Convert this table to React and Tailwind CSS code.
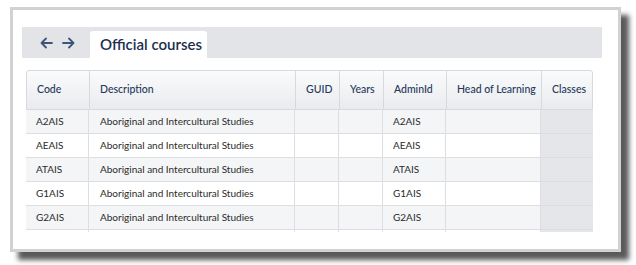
import React from 'react';

const columns = [
  { key: 'code', label: 'Code', width: 'w-[63px]' },
  { key: 'description', label: 'Description', width: 'w-[206px]' },
  { key: 'guid', label: 'GUID', width: 'w-[44px]' },
  { key: 'years', label: 'Years', width: 'w-[44px]' },
  { key: 'adminId', label: 'AdminId', width: 'w-[63px]' },
  { key: 'head', label: 'Head of Learning', width: 'w-[95px]' },
  { key: 'classes', label: 'Classes', width: 'w-[52px]' },
];

const rows = ['A2AIS', 'AEAIS', 'ATAIS', 'G1AIS', 'G2AIS'].map((code) => ({
  code,
  description: 'Aboriginal and Intercultural Studies',
  guid: '',
  years: '',
  adminId: code,
  head: '',
  classes: '',
}));

const App = () => {
  return (
    <div className="w-[636px] h-[265px] bg-white pt-[7px] pl-[10px] font-['Lato',sans-serif]">
      {/* Framed screenshot with heavy shadow */}
      <div className="w-[611px] h-[245px] border-[3px] border-[#d2d2d2] bg-white shadow-[8px_8px_5px_#5a5a5a] pt-[17px] pl-[9px] pr-[16px] overflow-hidden">
        {/* Tab bar */}
        <div className="h-[31px] bg-[#e2e4e8] flex items-end">
          <div className="flex items-center gap-[9px] h-full pl-[18px] pr-[15px] text-[#3d5577]">
            <svg width="13" height="12" viewBox="0 0 13 12" fill="none" stroke="currentColor" strokeWidth="1.8" strokeLinecap="round" strokeLinejoin="round">
              <path d="M12 6H1.5M6 1.5L1.5 6L6 10.5" />
            </svg>
            <svg width="13" height="12" viewBox="0 0 13 12" fill="none" stroke="currentColor" strokeWidth="1.8" strokeLinecap="round" strokeLinejoin="round">
              <path d="M1 6h10.5M7 1.5L11.5 6L7 10.5" />
            </svg>
          </div>
          <div className="h-[27px] w-[117px] bg-white rounded-t-[3px] pl-[10px] flex items-center whitespace-nowrap text-[15px] font-semibold text-[#1c2f4f]">
            Official courses
          </div>
        </div>

        {/* Table */}
        <div className="mt-[12px] ml-[4px] w-[567px] h-[162px] overflow-hidden">
          <div className="flex h-[40px] bg-gradient-to-b from-[#fafbfc] to-[#e9ebee] border border-[#d6d9dd] rounded-t-[3px] text-[10.5px] font-medium text-[#27385a] whitespace-nowrap">
            {columns.map((col, i) => (
              <div
                key={col.key}
                className={`${col.width} shrink-0 flex items-center ${
                  i === 1 ? 'pl-[10px]' : 'pl-[10px]'
                } ${i < columns.length - 1 ? 'border-r border-[#d6d9dd]' : ''}`}
              >
                {col.label}
              </div>
            ))}
          </div>
          {rows.map((row, r) => (
            <div
              key={row.code}
              className={`flex h-[24px] border-b border-[#dcdee2] text-[10px] text-[#2b2b2b] ${
                r % 2 === 0 ? 'bg-[#f4f5f7]' : 'bg-white'
              }`}
            >
              {columns.map((col, i) => (
                <div
                  key={col.key}
                  className={`${col.width} shrink-0 flex items-center ${
                    i === 1 ? 'pl-[11px]' : 'pl-[10px]'
                  } ${i < columns.length - 1 ? 'border-r border-[#dcdee2]' : ''} ${
                    col.key === 'classes' ? 'bg-[#e4e6ea]' : ''
                  }`}
                >
                  {row[col.key]}
                </div>
              ))}
            </div>
          ))}
          {/* partially visible next row */}
          <div className="flex h-[24px] bg-white">
            {columns.map((col, i) => (
              <div
                key={col.key}
                className={`${col.width} shrink-0 ${i < columns.length - 1 ? 'border-r border-[#dcdee2]' : ''} ${
                  col.key === 'classes' ? 'bg-[#e4e6ea]' : ''
                }`}
              />
            ))}
          </div>
        </div>
      </div>
    </div>
  );
};

export default App;
